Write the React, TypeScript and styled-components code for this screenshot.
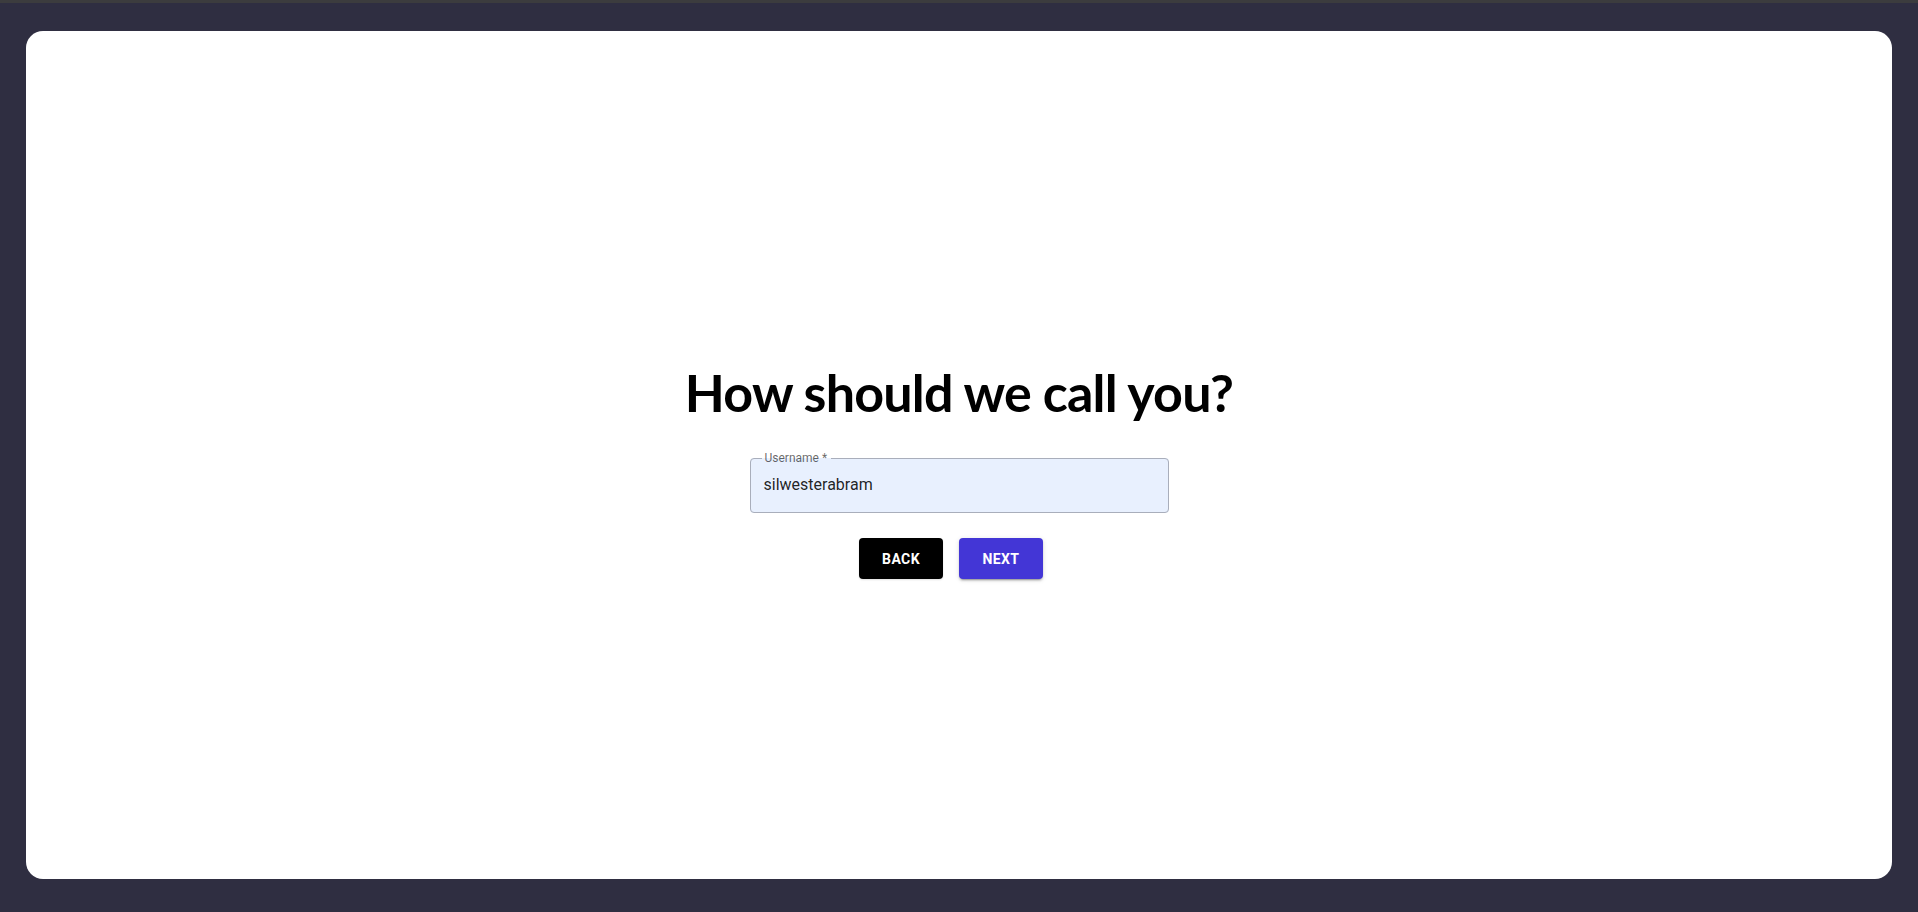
import React from "react";
import styled, { createGlobalStyle } from "styled-components";

const Global = createGlobalStyle`
  html, body { margin: 0; padding: 0; background: #2f2e41; }
  body { font-family: Roboto, "Liberation Sans", sans-serif; }
  * { box-sizing: border-box; }
`;

const Page = styled.div`
  min-height: 912px;
  display: flex;
  flex-direction: column;
`;

const TopStrip = styled.div`
  height: 3px;
  background: #3c3c3e;
`;

const Frame = styled.div`
  padding: 28px 26px 34px 26px;
`;

const Card = styled.main`
  height: 848px;
  background: #ffffff;
  border-radius: 17px;
  display: flex;
  flex-direction: column;
  align-items: center;
  padding-top: 331px;
`;

const Title = styled.h1`
  margin: 0;
  font-family: "Trebuchet MS", Lato, "Open Sans", sans-serif;
  font-weight: 700;
  font-size: 52px;
  line-height: 60px;
  color: #000;
  letter-spacing: -0.8px;
`;

const Field = styled.fieldset`
  margin: 30px 0 0 0;
  width: 419px;
  height: 61px;
  border: 1px solid #a9aebb;
  border-radius: 4px;
  background: #e8f0fe;
  padding: 0 13px;
`;

const Legend = styled.legend`
  margin-left: -2px;
  padding: 0 4px 0 3px;
  font-family: Roboto, sans-serif;
  font-size: 12px;
  line-height: 12px;
  color: rgba(0, 0, 0, 0.6);
`;

const Value = styled.div`
  font-family: Roboto, sans-serif;
  font-size: 16px;
  line-height: 20px;
  color: rgba(0, 0, 0, 0.87);
  margin-top: 11px;
`;

const Buttons = styled.div`
  display: flex;
  margin-top: 25px;
`;

const Button = styled.button<{ $primary?: boolean }>`
  width: 84px;
  height: 41px;
  margin-right: 16px;
  border: none;
  border-radius: 4px;
  background: ${(p) => (p.$primary ? "#4336d6" : "#000000")};
  color: #fff;
  font-family: Roboto, sans-serif;
  font-weight: 700;
  font-size: 14px;
  letter-spacing: 0.4px;
  text-transform: uppercase;
  box-shadow: ${(p) =>
    p.$primary
      ? "0px 3px 1px -2px rgba(0,0,0,0.2), 0px 2px 2px 0px rgba(0,0,0,0.14), 0px 1px 5px 0px rgba(0,0,0,0.12)"
      : "0px 1px 2px rgba(0,0,0,0.12)"};
  cursor: pointer;
`;

export default function App() {
  return (
    <Page>
      <Global />
      <TopStrip />
      <Frame>
        <Card>
          <Title>How should we call you?</Title>
          <Field>
            <Legend>Username *</Legend>
            <Value>silwesterabram</Value>
          </Field>
          <Buttons>
            <Button>Back</Button>
            <Button $primary>Next</Button>
          </Buttons>
        </Card>
      </Frame>
    </Page>
  );
}
